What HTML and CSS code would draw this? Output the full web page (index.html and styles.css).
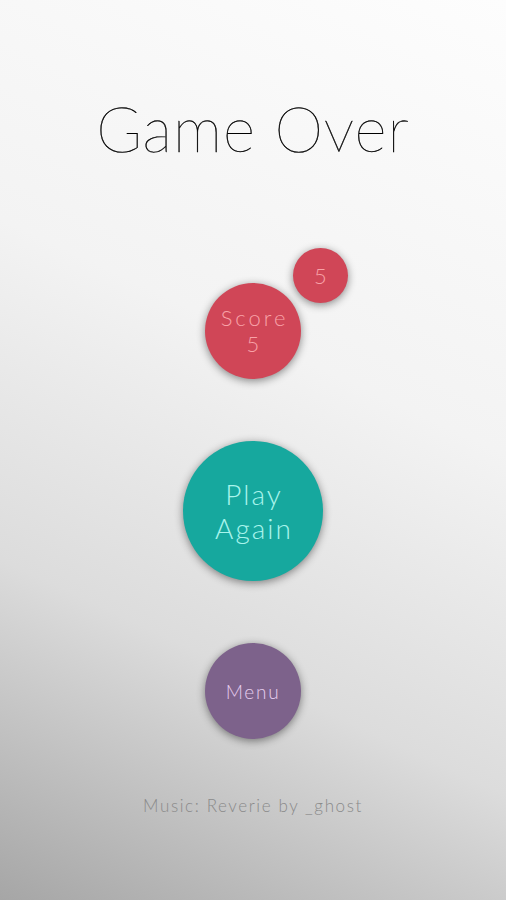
FILE: index.html
```html
<!DOCTYPE html>
<html>
<head>
<meta charset="utf-8">
<link rel="stylesheet" href="styles.css">
</head>
<body>
<div class="screen">
  <h1 class="title">Game Over</h1>
  <div class="score-wrap">
    <div class="circle score">
      <span>Score</span>
      <span>5</span>
    </div>
    <div class="circle best">5</div>
  </div>
  <div class="circle play">
    <span>Play</span>
    <span>Again</span>
  </div>
  <div class="circle menu">Menu</div>
  <p class="credit">Music: Reverie by _ghost</p>
</div>
</body>
</html>
```
FILE: styles.css
```css
html, body {
  margin: 0;
  padding: 0;
}
body {
  width: 506px;
  height: 900px;
  overflow: hidden;
  font-family: Lato, "Open Sans", sans-serif;
}
.screen {
  width: 506px;
  height: 900px;
  box-sizing: border-box;
  padding-top: 92px;
  display: flex;
  flex-direction: column;
  align-items: center;
  background: linear-gradient(205deg, #fdfdfd 0%, #f3f3f3 40%, #dcdcdc 70%, #a6a6a6 100%);
}
.title {
  margin: 0;
  font-size: 62px;
  line-height: 72px;
  font-weight: 100;
  letter-spacing: 1px;
  color: #000;
  -webkit-text-stroke: 0.4px #000;
}
.circle {
  border-radius: 50%;
  display: flex;
  flex-direction: column;
  align-items: center;
  justify-content: center;
  font-weight: 300;
  box-shadow: 0 2px 9px rgba(0, 0, 0, 0.45);
}
.score-wrap {
  position: relative;
  margin-top: 119px;
}
.score {
  width: 96px;
  height: 96px;
  background: #d04657;
  color: #f8a2a8;
  font-size: 22px;
  line-height: 26px;
  letter-spacing: 3px;
}
.score span {
  margin-right: -3px;
}
.best {
  position: absolute;
  left: 88px;
  top: -35px;
  width: 55px;
  height: 55px;
  background: #d04657;
  color: #f8a2a8;
  font-size: 22px;
}
.play {
  margin-top: 62px;
  width: 140px;
  height: 140px;
  background: #16a89e;
  color: #a8f4ec;
  font-size: 28px;
  line-height: 34px;
  letter-spacing: 2px;
}
.play span {
  margin-right: -2px;
}
.menu {
  margin-top: 62px;
  width: 96px;
  height: 96px;
  background: #7d628b;
  color: #e6cdee;
  font-size: 19px;
  letter-spacing: 1.7px;
}
.credit {
  margin: 57px 0 0;
  font-size: 17px;
  line-height: 20px;
  font-weight: 300;
  letter-spacing: 1.6px;
  color: #8a8a8a;
}
```
